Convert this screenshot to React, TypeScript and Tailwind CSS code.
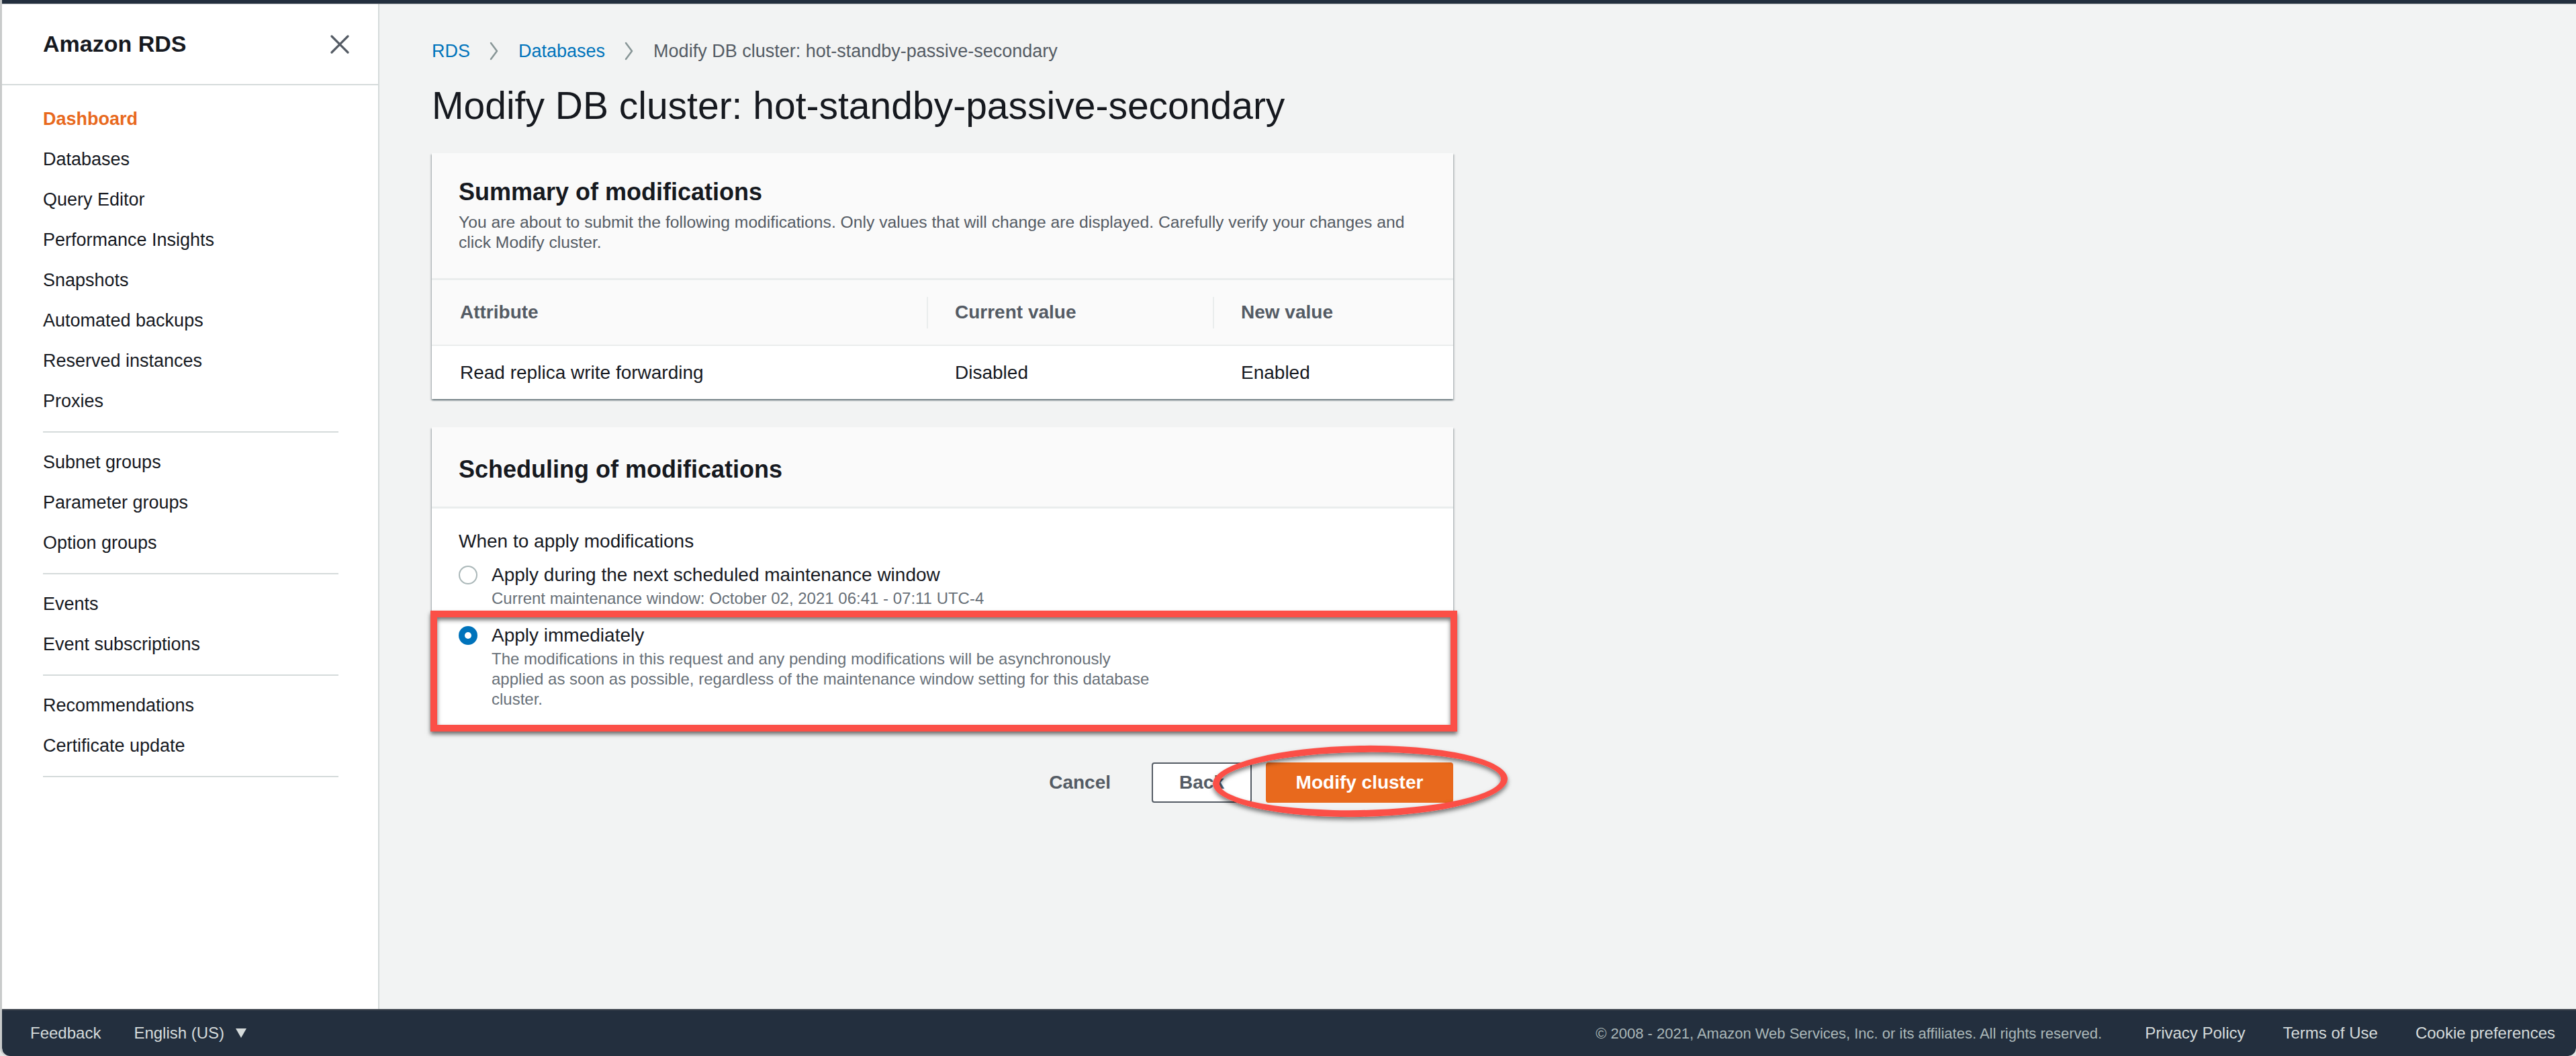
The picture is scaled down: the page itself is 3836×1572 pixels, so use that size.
import React from 'react';

const NAV_GROUPS: string[][] = [
  [
    'Dashboard',
    'Databases',
    'Query Editor',
    'Performance Insights',
    'Snapshots',
    'Automated backups',
    'Reserved instances',
    'Proxies',
  ],
  ['Subnet groups', 'Parameter groups', 'Option groups'],
  ['Events', 'Event subscriptions'],
  ['Recommendations', 'Certificate update'],
];

const ChevronRight = () => (
  <svg width="16" height="30" viewBox="0 0 16 30" fill="none" className="shrink-0">
    <path d="M3 3l9 12-9 12" stroke="#879596" strokeWidth="2.5" strokeLinecap="round" strokeLinejoin="round" />
  </svg>
);

const Radio = ({ checked }: { checked: boolean }) =>
  checked ? (
    <span className="block w-[28px] h-[28px] rounded-full border-[9px] border-[#0073bb] bg-white" />
  ) : (
    <span className="block w-[28px] h-[28px] rounded-full border-2 border-[#aab7b8] bg-white" />
  );

const CARD_SHADOW =
  'shadow-[0_2px_2px_0_rgba(0,28,36,0.4),2px_2px_2px_0_rgba(0,28,36,0.15),-2px_2px_2px_0_rgba(0,28,36,0.15)]';

const Sidebar = () => (
  <aside className="w-[562px] shrink-0 bg-white border-r-2 border-[#d5dbdb] flex flex-col">
    {/* Header */}
    <div className="h-[121px] flex items-center justify-between pl-[61px] pr-[43px] border-b-2 border-[#d5dbdb]">
      <span className="text-[34px] font-bold text-[#16191f]">Amazon RDS</span>
      <svg width="28" height="28" viewBox="0 0 28 28" fill="none">
        <path d="M2 2l24 24M26 2L2 26" stroke="#545b64" strokeWidth="3.2" strokeLinecap="round" />
      </svg>
    </div>

    <nav className="pt-[20px] pl-[61px]">
      {NAV_GROUPS.map((group, gi) => (
        <div key={gi}>
          {group.map((item) => (
            <div
              key={item}
              className={`h-[60px] flex items-center text-[27px] ${
                item === 'Dashboard' ? 'font-bold text-[#e8691d]' : 'text-[#16191f]'
              }`}
            >
              {item}
            </div>
          ))}
          <div className="mt-[15px] mb-[14px] w-[440px] h-[2px] bg-[#d5dbdb]" />
        </div>
      ))}
    </nav>
  </aside>
);

const SummaryCard = () => (
  <section className={`bg-white ${CARD_SHADOW}`}>
    <div className="bg-[#fafafa] px-[40px] pt-[36px] pb-[38px] border-b-[3px] border-[#eaeded]">
      <h2 className="text-[36px] leading-[44px] font-bold text-[#16191f]">Summary of modifications</h2>
      <p className="mt-[8px] text-[24.7px] leading-[30px] text-[#545b64]">
        <span className="block whitespace-nowrap">
          You are about to submit the following modifications. Only values that will change are displayed. Carefully
          verify your changes and
        </span>
        <span className="block whitespace-nowrap">click Modify cluster.</span>
      </p>
    </div>

    {/* Table */}
    <div className="grid grid-cols-[737px_426px_1fr] bg-[#fafafa] border-b-2 border-[#eaeded] h-[98px] text-[28px] font-bold text-[#545b64]">
      <div className="flex items-center pl-[42px]">Attribute</div>
      <div className="flex items-center">
        <div className="h-[47px] border-l-2 border-[#eaeded]" />
        <span className="pl-[40px]">Current value</span>
      </div>
      <div className="flex items-center">
        <div className="h-[47px] border-l-2 border-[#eaeded]" />
        <span className="pl-[40px]">New value</span>
      </div>
    </div>
    <div className="grid grid-cols-[737px_426px_1fr] h-[79px] text-[28px] text-[#16191f]">
      <div className="flex items-center pl-[42px]">Read replica write forwarding</div>
      <div className="flex items-center pl-[42px]">Disabled</div>
      <div className="flex items-center pl-[42px]">Enabled</div>
    </div>
  </section>
);

const SchedulingCard = () => (
  <section className={`relative bg-white ${CARD_SHADOW}`}>
    <div className="bg-[#fafafa] h-[121px] px-[40px] pt-[41px] border-b-[3px] border-[#eaeded]">
      <h2 className="text-[36px] leading-[44px] font-bold text-[#16191f]">Scheduling of modifications</h2>
    </div>

    <div className="px-[40px] pt-[29px] pb-[29px]">
      <div className="text-[28px] leading-[40px] text-[#16191f]">When to apply modifications</div>

      <div className="mt-[10px] flex gap-[21px]">
        <div className="h-[40px] flex items-center">
          <Radio checked={false} />
        </div>
        <div>
          <div className="text-[28px] leading-[40px] text-[#16191f]">
            Apply during the next scheduled maintenance window
          </div>
          <div className="text-[24px] leading-[30px] text-[#687078]">
            Current maintenance window: October 02, 2021 06:41 - 07:11 UTC-4
          </div>
        </div>
      </div>

      <div className="mt-[20px] flex gap-[21px]">
        <div className="h-[40px] flex items-center">
          <Radio checked />
        </div>
        <div>
          <div className="text-[28px] leading-[40px] text-[#16191f]">Apply immediately</div>
          <div className="text-[24px] leading-[30px] text-[#687078]">
            <span className="block whitespace-nowrap">
              The modifications in this request and any pending modifications will be asynchronously
            </span>
            <span className="block whitespace-nowrap">
              applied as soon as possible, regardless of the maintenance window setting for this database
            </span>
            <span className="block whitespace-nowrap">cluster.</span>
          </div>
        </div>
      </div>
    </div>

    {/* Annotation box */}
    <div className="absolute left-[-2px] right-[-6px] top-[273px] bottom-[-4px] border-[10px] border-[#fb4f47] shadow-[0_4px_6px_rgba(0,0,0,0.55),inset_0_4px_6px_rgba(0,0,0,0.55)] pointer-events-none" />
  </section>
);

const Actions = () => (
  <div className="mt-[50px] flex justify-end items-center gap-[21px] text-[28px] font-bold">
    <button className="h-[60px] px-[40px] text-[#545b64]">Cancel</button>
    <button className="h-[60px] w-[149px] rounded-[4px] border-2 border-[#545b64] bg-white text-[#545b64]">
      Back
    </button>
    <div className="relative">
      <button className="h-[60px] w-[279px] rounded-[4px] border-2 border-[#e8691d] bg-[#e8691d] text-white">
        Modify cluster
      </button>
      {/* Annotation ellipse */}
      <div className="absolute left-[-79px] top-[-25px] w-[439px] h-[106px] rounded-[50%] border-[10px] border-[#fb4f47] rotate-[-1deg] shadow-[0_4px_6px_rgba(0,0,0,0.5),inset_0_4px_6px_rgba(0,0,0,0.5)] pointer-events-none" />
    </div>
  </div>
);

const Footer = () => (
  <footer className="h-[70px] shrink-0 bg-[#232f3e] border-t-2 border-[#414750] rounded-b-[12px] flex items-center justify-between pl-[42px] pr-[31px] text-[#d5dbdb] text-[24px]">
    <div className="flex items-center">
      <span>Feedback</span>
      <span className="ml-[49px]">English (US)</span>
      <svg width="16" height="14" viewBox="0 0 16 14" className="ml-[17px]">
        <path d="M0 0h16L8 14z" fill="#d5dbdb" />
      </svg>
    </div>
    <div className="flex items-center gap-[56px]">
      <span className="text-[22px] text-[#aab7b8] mr-[8px]">
        © 2008 - 2021, Amazon Web Services, Inc. or its affiliates. All rights reserved.
      </span>
      <span>Privacy Policy</span>
      <span>Terms of Use</span>
      <span>Cookie preferences</span>
    </div>
  </footer>
);

export default function App() {
  return (
    <div className="w-full h-[1572px] bg-[#e6e6e6] font-['Liberation_Sans',Arial,sans-serif]">
      <div className="h-full flex flex-col border-l-[3px] border-[#c9cbcb] rounded-b-[12px] overflow-hidden bg-[#f2f3f3]">
        <div className="h-[6px] shrink-0 bg-[#232f3e] border-b border-[#687078]" />
        <div className="flex flex-1 min-h-0">
          <Sidebar />
          <main className="flex-1 pl-[78px] pt-[50px]">
            <div className="w-[1521px]">
              {/* Breadcrumb */}
              <div className="flex items-center h-[40px] text-[27px] gap-[28px]">
                <span className="text-[#0073bb]">RDS</span>
                <ChevronRight />
                <span className="text-[#0073bb]">Databases</span>
                <ChevronRight />
                <span className="text-[#545b64]">Modify DB cluster: hot-standby-passive-secondary</span>
              </div>

              <h1 className="mt-[27px] text-[57px] leading-[68px] text-[#16191f]">
                Modify DB cluster: hot-standby-passive-secondary
              </h1>

              <div className="mt-[37px] flex flex-col gap-[42px]">
                <SummaryCard />
                <SchedulingCard />
              </div>

              <Actions />
            </div>
          </main>
        </div>
        <Footer />
      </div>
    </div>
  );
}
